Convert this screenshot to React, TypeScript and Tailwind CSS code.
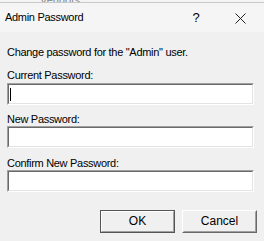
import React from "react";

function Field({ cursor }: { cursor?: boolean }) {
  return (
    <div className="h-[22px] w-[247px] border border-t-[#a0a0a0] border-l-[#a0a0a0] border-b-white border-r-white">
      <div className="h-full w-full border border-t-[#696969] border-l-[#696969] border-b-[#e3e3e3] border-r-[#e3e3e3] bg-white flex items-center pl-[1px]">
        {cursor && <div className="w-px h-[13px] bg-black" />}
      </div>
    </div>
  );
}

export default function App() {
  const font = { fontFamily: '"Liberation Sans", Arial, sans-serif' };
  return (
    <div
      className="w-[264px] h-[241px] bg-[#f0f0f0] overflow-hidden flex flex-col text-black"
      style={font}
    >
      <div className="h-[3px] bg-[#f4f4f4] border-b border-[#c8c8c8] relative overflow-hidden">
        <span className="absolute left-[40px] top-[-8px] text-[11px] text-[#888]">Vendors</span>
      </div>
      <div className="h-[29px] bg-[#f5f5f5] flex items-center pl-[5px] pr-[18px]">
        <span className="text-[11px] tracking-[-0.3px] flex-1">Admin Password</span>
        <span className="text-[13px] w-[10px] text-center mr-[34px]">?</span>
        <svg width="11" height="11" viewBox="0 0 11 11" className="mt-[1px]">
          <path d="M0.5 0.5 L10.5 10.5 M10.5 0.5 L0.5 10.5" stroke="#222" strokeWidth="1" />
        </svg>
      </div>
      <div className="flex flex-col px-[7px] text-[11px] tracking-[-0.3px] leading-[13px]">
        <div className="mt-[14px]">Change password for the "Admin" user.</div>
        <div className="mt-[10px]">Current Password:</div>
        <div className="mt-[1px]">
          <Field cursor />
        </div>
        <div className="mt-[8px]">New Password:</div>
        <div className="mt-[0px]">
          <Field />
        </div>
        <div className="mt-[9px]">Confirm New Password:</div>
        <div className="mt-[0px]">
          <Field />
        </div>
        <div className="mt-[18px] flex justify-end gap-[7px]">
          <div className="w-[75px] h-[23px] border border-[#555]">
            <div className="h-full w-full border border-t-white border-l-white border-b-[#a0a0a0] border-r-[#a0a0a0] bg-[#f0f0f0] flex items-center justify-center text-[12px] tracking-normal">
              OK
            </div>
          </div>
          <div className="w-[75px] h-[23px] border border-t-white border-l-white border-b-[#696969] border-r-[#696969]">
            <div className="h-full w-full border border-t-[#f0f0f0] border-l-[#f0f0f0] border-b-[#a0a0a0] border-r-[#a0a0a0] bg-[#f0f0f0] flex items-center justify-center text-[12px] tracking-normal">
              Cancel
            </div>
          </div>
        </div>
      </div>
    </div>
  );
}
